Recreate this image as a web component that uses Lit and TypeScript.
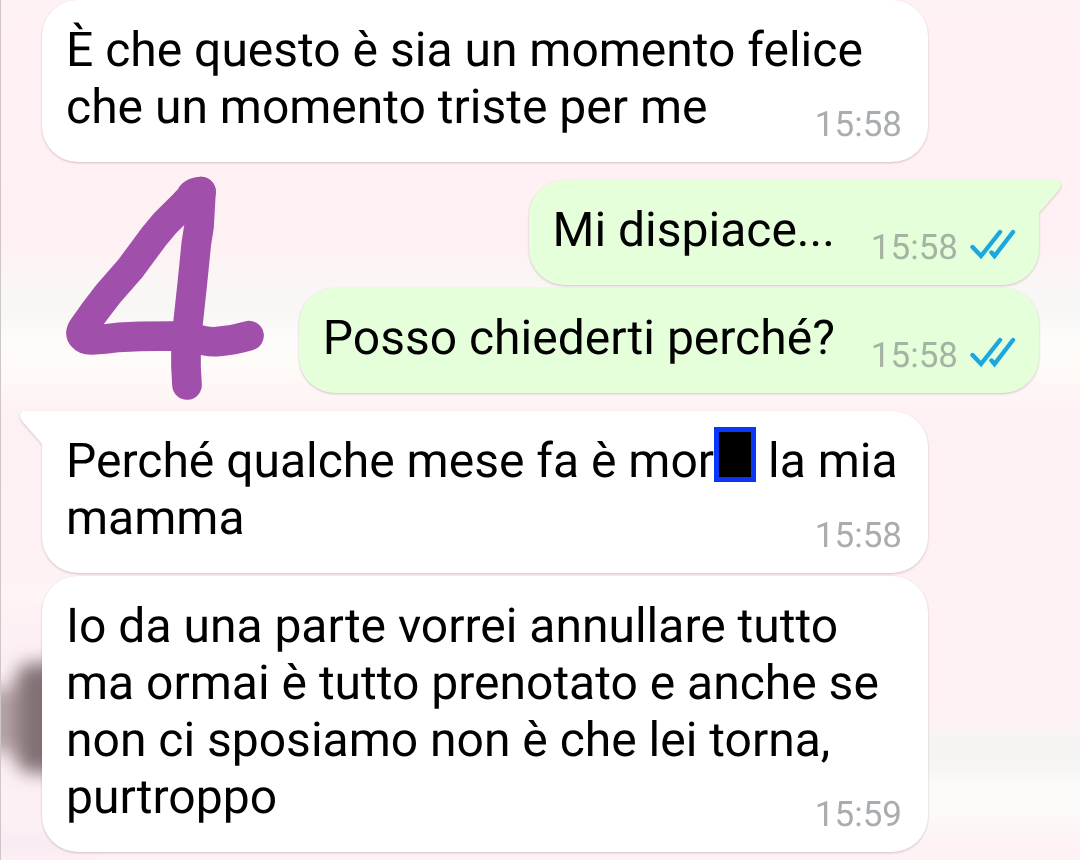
import { LitElement, html, svg, css, nothing } from "lit";
import { customElement, property } from "lit/decorators.js";

interface Message {
  side: "in" | "out";
  time: string;
  before: string;
  after?: string;
  tail?: boolean;
}

const MESSAGES: Message[] = [
  { side: "in", time: "15:58", before: "È che questo è sia un momento felice che un momento triste per me" },
  { side: "out", time: "15:58", before: "Mi dispiace...", tail: true },
  { side: "out", time: "15:58", before: "Posso chiederti perché?" },
  { side: "in", time: "15:58", before: "Perché qualche mese fa è mor", after: " la mia mamma", tail: true },
  {
    side: "in",
    time: "15:59",
    before:
      "Io da una parte vorrei annullare tutto ma ormai è tutto prenotato e anche se non ci sposiamo non è che lei torna, purtroppo",
  },
];

@customElement("chat-bubble")
export class ChatBubble extends LitElement {
  @property({ attribute: false }) message!: Message;

  static styles = css`
    :host {
      display: flex;
    }
    .bubble {
      position: relative;
      display: grid;
      box-sizing: border-box;
      padding: 21px 26px 17px 24px;
      border-radius: 36px;
      filter: drop-shadow(0 1px 1px rgba(120, 80, 95, 0.32));
    }
    .in {
      max-width: calc(100% - 111px);
      background: #fff;
      color: #fff;
    }
    .out {
      display: flex;
      align-items: flex-end;
      gap: 36px;
      margin-left: auto;
      padding-right: 23px;
      background: #e5ffdb;
      color: #e5ffdb;
    }
    .in > .text,
    .in > .meta {
      grid-area: 1 / 1;
    }
    /* Keeps the last line clear of the timestamp. */
    .in > .text::after {
      content: "";
      display: inline-block;
      width: 100px;
    }
    .in.tailed {
      border-top-left-radius: 0;
    }
    .out.tailed {
      border-top-right-radius: 0;
    }
    .text {
      margin: 0;
      padding-bottom: 10px;
      font-size: 48px;
      line-height: 57px;
      font-feature-settings: "calt" 0, "ccmp" 0, "locl" 0, "liga" 0;
      color: #000;
    }
    .meta {
      display: flex;
      align-items: center;
      gap: 12px;
      align-self: end;
      justify-self: end;
      font-size: 35px;
      line-height: 41px;
      color: #a9adaf;
    }
    .out .meta {
      color: #a5b3a3;
    }
    .ticks {
      display: block;
      width: 46px;
      height: 31px;
      margin-bottom: 6px;
    }
    .tail {
      position: absolute;
      top: 0;
      width: 22px;
      height: 34px;
    }
    .in .tail {
      right: 100%;
    }
    .out .tail {
      left: 100%;
    }
    .redacted {
      display: inline-block;
      box-sizing: border-box;
      width: 42px;
      height: 55px;
      margin: -6px 0;
      vertical-align: 1px;
      border: 5px solid #0a37f5;
      background: #000;
    }
  `;

  private renderTail(side: "in" | "out") {
    const d =
      side === "in"
        ? "M22 0H5Q0 0 0 5Q0 7 2 10L22 33Z"
        : "M0 0H17Q22 0 22 5Q22 7 20 10L0 33Z";
    return html`<svg class="tail" viewBox="0 0 22 34" aria-hidden="true">
      ${svg`<path d=${d} fill="currentColor" />`}
    </svg>`;
  }

  render() {
    const { side, time, before, after, tail } = this.message;
    return html`
      <article class="bubble ${side} ${tail ? "tailed" : ""}">
        ${tail ? this.renderTail(side) : nothing}
        <p class="text">${before}${after ? html`<span class="redacted"></span>${after}` : nothing}</p>
        <div class="meta">
          <time>${time}</time>
          ${side === "out"
            ? html`<svg class="ticks" viewBox="0 0 46 31" fill="none" stroke="#1ba7e0" stroke-width="4.400" stroke-linecap="round">
                <path d="M2.5 18 11 27 30 3M21.500 23.500 24.500 27 43 3" />
              </svg>`
            : nothing}
        </div>
      </article>
    `;
  }
}

@customElement("app-root")
export class AppRoot extends LitElement {
  static styles = css`
    :host {
      display: block;
      font-family: Roboto, sans-serif;
      text-rendering: geometricPrecision;
    }
    .chat {
      position: relative;
      isolation: isolate;
      display: flex;
      flex-direction: column;
      gap: 3px;
      box-sizing: border-box;
      min-height: 100vh;
      padding: 0 41px 8px 41px;
      overflow: hidden;
      border-left: 1px solid #cfc6c9;
      background: linear-gradient(
        #fff2f4 0,
        #fff1f3 245px,
        #f9f7f6 290px,
        #f9f7f6 312px,
        #fefcfa 340px,
        #fefbf9 365px,
        #fef1f3 415px,
        #fff2f4 712px,
        #f6f4f3 745px,
        #f6f5f3 765px,
        #fcfbf9 785px,
        #fcfaf8 815px,
        #fef2f4 845px
      );
    }
    .switch {
      margin-top: 15px;
    }
    .blur {
      position: absolute;
      z-index: -1;
      left: 0;
      top: 560px;
      width: 100px;
      height: 300px;
    }
    .doodle {
      position: absolute;
      left: 49px;
      top: 160px;
      width: 230px;
      height: 250px;
    }
  `;

  render() {
    return html`
      <main class="chat">
        <svg class="blur" viewBox="0 0 100 300" aria-hidden="true">
          <defs>
            <filter id="soft" x="-50%" y="-50%" width="200%" height="200%"><feGaussianBlur stdDeviation="9" /></filter>
            <filter id="haze" x="-50%" y="-50%" width="200%" height="200%"><feGaussianBlur stdDeviation="12" /></filter>
          </defs>
          <rect x="-30" y="65" width="130" height="270" fill="#fdf0f5" filter="url(#haze)" />
          <rect x="-30" y="28" width="90" height="9" fill="#fffafa" filter="url(#soft)" />
          <rect x="-30" y="128" width="60" height="64" fill="#b8a5a8" filter="url(#soft)" />
          <rect x="15" y="103" width="80" height="110" rx="16" fill="#827174" filter="url(#soft)" />
          <rect x="-30" y="278" width="100" height="14" fill="#f8e8f1" filter="url(#soft)" />
        </svg>
        ${MESSAGES.map(
          (m, i) => html`<chat-bubble
            class=${i > 0 && MESSAGES[i - 1].side !== m.side ? "switch" : ""}
            .message=${m}
          ></chat-bubble>`
        )}
        <svg class="doodle" viewBox="0 0 690 750" fill="none" stroke="#a050aa" stroke-width="89" stroke-linecap="round" stroke-linejoin="round" aria-hidden="true">
          <path d="M453 95Q428 96 420 114L401 134L345 190L310 232L239 328L174 402L130 460L100 502Q87 520 98 530Q106 540 125 540Q165 538 205 532L270 529L370 528L430 534Q470 547 500 545Q550 541 597 527" />
          <path d="M453 95L447 200L439 250L427 370L414 490L408 550V620L411 675" />
        </svg>
      </main>
    `;
  }
}
